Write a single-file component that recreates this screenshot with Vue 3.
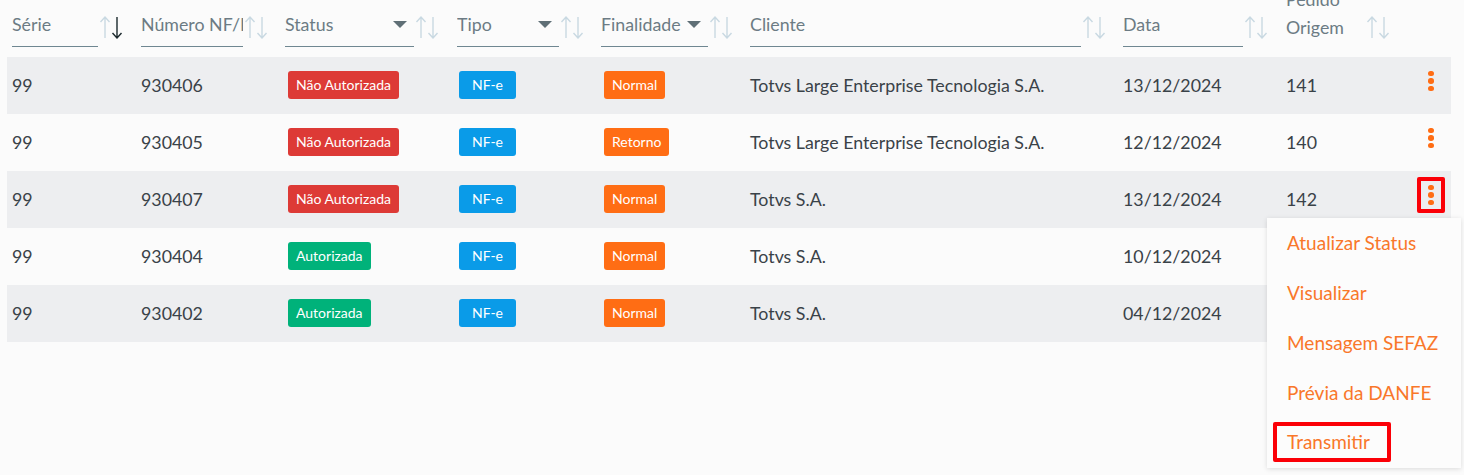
<template>
  <div class="page">
    <div class="grid head">
      <div v-for="c in columns" :key="c.label" class="th">
        <div v-if="c.stacked" class="stacked">Pedido<br />Origem</div>
        <div v-else class="field" :style="{ width: c.width + 'px' }">
          <span class="field-label">{{ c.label }}</span>
          <span v-if="c.select" class="caret"></span>
        </div>
        <svg class="sort" width="24" height="24" viewBox="0 0 24 24">
          <path d="M6 23V2M1.500 7L6 2l4.500 5" class="up" />
          <path d="M18 2v21M13.500 18l4.500 5 4.500-5" :class="c.active ? 'down-active' : 'down'" />
        </svg>
      </div>
    </div>

    <div v-for="(r, i) in rows" :key="r.numero" class="grid row" :class="{ striped: i % 2 === 0 }">
      <div class="td">{{ r.serie }}</div>
      <div class="td">{{ r.numero }}</div>
      <div class="td"><span class="badge" :class="r.status === 'Autorizada' ? 'green' : 'red'">{{ r.status }}</span></div>
      <div class="td"><span class="badge blue">NF-e</span></div>
      <div class="td"><span class="badge orange">{{ r.finalidade }}</span></div>
      <div class="td">{{ r.cliente }}</div>
      <div class="td">{{ r.data }}</div>
      <div class="td">{{ r.pedido }}</div>
      <div class="td actions">
        <button v-if="r.pedido" class="kebab" :class="{ marked: r.numero === '930407' }">
          <i></i><i></i><i></i>
        </button>
        <ul v-if="r.numero === '930407'" class="menu">
          <li v-for="m in menu" :key="m"><span :class="{ marked: m === 'Transmitir' }">{{ m }}</span></li>
        </ul>
      </div>
    </div>
  </div>
</template>

<script setup>
const columns = [
  { label: 'Série', width: 86, active: true },
  { label: 'Número NF/R', width: 102 },
  { label: 'Status', width: 129, select: true },
  { label: 'Tipo', width: 102, select: true },
  { label: 'Finalidade', width: 107, select: true },
  { label: 'Cliente', width: 331 },
  { label: 'Data', width: 120 },
  { label: 'Pedido Origem', stacked: true }
]

const totvsLarge = 'Totvs Large Enterprise Tecnologia S.A.'

// the last two rows sit behind the open menu, so their pedido is not shown
const rows = [
  { serie: '99', numero: '930406', status: 'Não Autorizada', finalidade: 'Normal', cliente: totvsLarge, data: '13/12/2024', pedido: '141' },
  { serie: '99', numero: '930405', status: 'Não Autorizada', finalidade: 'Retorno', cliente: totvsLarge, data: '12/12/2024', pedido: '140' },
  { serie: '99', numero: '930407', status: 'Não Autorizada', finalidade: 'Normal', cliente: 'Totvs S.A.', data: '13/12/2024', pedido: '142' },
  { serie: '99', numero: '930404', status: 'Autorizada', finalidade: 'Normal', cliente: 'Totvs S.A.', data: '10/12/2024', pedido: '' },
  { serie: '99', numero: '930402', status: 'Autorizada', finalidade: 'Normal', cliente: 'Totvs S.A.', data: '04/12/2024', pedido: '' }
]

const menu = ['Atualizar Status', 'Visualizar', 'Mensagem SEFAZ', 'Prévia da DANFE', 'Transmitir']
</script>

<style>
html, body {
  margin: 0;
  overflow: hidden;
  background: #fbfbfb;
}
</style>

<style scoped>
.page {
  height: 475px;
  overflow: hidden;
  padding: 0 13px 0 7px;
  box-sizing: border-box;
  font-family: Lato, "Noto Sans", sans-serif;
  font-size: 17.8px;
  color: #3a4248;
}
.grid {
  display: grid;
  grid-template-columns: 129px 144px 172px 144px 149px 373px 163px 1fr;
}
.row {
  grid-template-columns: 129px 144px 172px 144px 149px 373px 163px 120px 1fr;
  height: 57px;
  align-items: center;
}
.striped { background: #edeef0; }
.head {
  height: 57px;
  grid-template-rows: 57px;
  align-items: flex-end;
}
.th {
  display: flex;
  align-items: flex-end;
  padding-left: 5px;
  padding-bottom: 10px;
  min-width: 0;
}
.field {
  display: flex;
  align-items: center;
  justify-content: space-between;
  height: 36px;
  border-bottom: 1px solid #6f8791;
  color: #6c7b84;
  overflow: hidden;
  white-space: nowrap;
  flex-shrink: 0;
  box-sizing: border-box;
  padding-right: 7px;
}
.field-label { margin-top: -10px; }
.caret {
  width: 0;
  height: 0;
  margin-top: -8px;
  border-left: 7px solid transparent;
  border-right: 7px solid transparent;
  border-top: 7px solid #5f6f76;
}
.stacked {
  width: 79px;
  flex-shrink: 0;
  line-height: 28px;
  color: #6c7b84;
  margin-bottom: 6px;
}
.sort {
  flex-shrink: 0;
  margin: 0 0 8px 1px;
  fill: none;
  stroke-width: 1.4;
}
.up, .down { stroke: #c9d9e2; }
.down-active { stroke: #1c2a2e; }
.td {
  padding-left: 5px;
  padding-bottom: 2px;
  white-space: nowrap;
}
.badge {
  display: block;
  width: fit-content;
  margin-left: 3px;
  padding: 0 8px;
  height: 28px;
  line-height: 28px;
  border-radius: 3px;
  color: #fff;
  font-size: 14px;
}
.red { background: #dd3a36; }
.green { background: #00b27a; }
.blue {
  background: #0a9be8;
  margin-left: 2px;
  padding: 0 13px;
}
.orange { background: #ff6d14; }
.actions {
  position: relative;
  display: flex;
  justify-content: flex-end;
  padding-right: 6px;
}
.kebab {
  width: 28px;
  height: 36px;
  margin-top: -7px;
  padding: 0;
  border: 0;
  background: none;
  display: flex;
  flex-direction: column;
  align-items: center;
  justify-content: center;
  gap: 2px;
  box-sizing: border-box;
}
.kebab i {
  width: 5.5px;
  height: 5.5px;
  border-radius: 50%;
  background: #ff6d14;
}
.kebab.marked {
  border: 4px solid #fb0007;
  border-radius: 2px;
}
.menu {
  position: absolute;
  top: 34px;
  right: -10px;
  width: 194px;
  margin: 0;
  padding: 0;
  list-style: none;
  background: #fcfcfc;
  box-shadow: 0 1px 5px rgba(0, 0, 0, 0.13);
  z-index: 2;
  color: #f9772a;
  font-size: 19px;
}
.menu li {
  height: 50px;
  line-height: 49px;
  padding-left: 20px;
}
.menu li span { display: inline-block; }
.menu li span.marked {
  line-height: 32px;
  margin-left: -14px;
  padding: 0 17px 0 10px;
  border: 4px solid #fb0007;
  border-radius: 2px;
  vertical-align: 1px;
}
</style>
